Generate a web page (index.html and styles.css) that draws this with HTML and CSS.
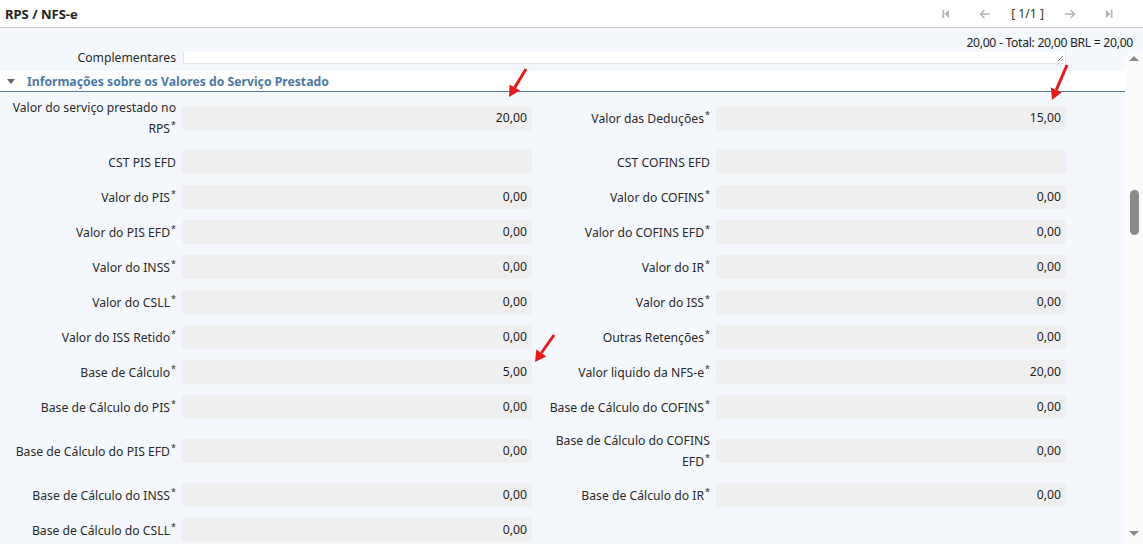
FILE: index.html
```html
<!DOCTYPE html>
<html lang="pt-br">
<head>
  <meta charset="UTF-8">
  <title>RPS / NFS-e</title>
  <link rel="stylesheet" href="styles.css">
</head>
<body>
  <div class="topbar">
    <span class="title">RPS / NFS-e</span>
    <div class="pager">
      <span class="pg-btn">
        <svg width="12" height="12" viewBox="0 0 12 12"><rect x="2.5" y="2" width="1.6" height="8" fill="#b4b4b4"/><polygon points="4.5,6 9,2 9,10" fill="#b4b4b4"/></svg>
      </span>
      <span class="pg-btn">
        <svg width="12" height="12" viewBox="0 0 12 12"><path d="M11 6H1.5M5.5 2L1.5 6L5.5 10" fill="none" stroke="#b0b0b0" stroke-width="1.3"/></svg>
      </span>
      <span class="pg-count">[ 1/1 ]</span>
      <span class="pg-btn">
        <svg width="12" height="12" viewBox="0 0 12 12"><path d="M1 6H10.5M6.5 2L10.5 6L6.5 10" fill="none" stroke="#b0b0b0" stroke-width="1.3"/></svg>
      </span>
      <span class="pg-btn">
        <svg width="12" height="12" viewBox="0 0 12 12"><polygon points="3,2 7.5,6 3,10" fill="#b4b4b4"/><rect x="7.9" y="2" width="1.6" height="8" fill="#b4b4b4"/></svg>
      </span>
    </div>
  </div>

  <div class="totals">20,00 - Total: 20,00 BRL = 20,00</div>

  <div class="scroll">
    <div class="form-area">
      <!-- campo complementares (cortado pelo scroll) -->
      <div class="compl-row">
        <label>Complementares</label>
        <div class="textarea">
          <svg class="grip" width="7" height="7" viewBox="0 0 7 7"><path d="M1 6L6 1M4 6L6 4" stroke="#777" stroke-width="0.9"/></svg>
        </div>
      </div>

      <div class="section">
        <span class="caret"></span>
        Informações sobre os Valores do Serviço Prestado
      </div>

      <div class="grid">
        <label>Valor do serviço prestado no RPS<sup>*</sup></label>
        <div class="field">20,00</div>
        <label>Valor das Deduções<sup>*</sup></label>
        <div class="field">15,00</div>

        <label>CST PIS EFD</label>
        <div class="field"></div>
        <label>CST COFINS EFD</label>
        <div class="field"></div>

        <label>Valor do PIS<sup>*</sup></label>
        <div class="field">0,00</div>
        <label>Valor do COFINS<sup>*</sup></label>
        <div class="field">0,00</div>

        <label>Valor do PIS EFD<sup>*</sup></label>
        <div class="field">0,00</div>
        <label>Valor do COFINS EFD<sup>*</sup></label>
        <div class="field">0,00</div>

        <label>Valor do INSS<sup>*</sup></label>
        <div class="field">0,00</div>
        <label>Valor do IR<sup>*</sup></label>
        <div class="field">0,00</div>

        <label>Valor do CSLL<sup>*</sup></label>
        <div class="field">0,00</div>
        <label>Valor do ISS<sup>*</sup></label>
        <div class="field">0,00</div>

        <label>Valor do ISS Retido<sup>*</sup></label>
        <div class="field">0,00</div>
        <label>Outras Retenções<sup>*</sup></label>
        <div class="field">0,00</div>

        <label>Base de Cálculo<sup>*</sup></label>
        <div class="field">5,00</div>
        <label>Valor liquido da NFS-e<sup>*</sup></label>
        <div class="field">20,00</div>

        <label>Base de Cálculo do PIS<sup>*</sup></label>
        <div class="field">0,00</div>
        <label>Base de Cálculo do COFINS<sup>*</sup></label>
        <div class="field">0,00</div>

        <label>Base de Cálculo do PIS EFD<sup>*</sup></label>
        <div class="field">0,00</div>
        <label>Base de Cálculo do COFINS EFD<sup>*</sup></label>
        <div class="field">0,00</div>

        <label>Base de Cálculo do INSS<sup>*</sup></label>
        <div class="field">0,00</div>
        <label>Base de Cálculo do IR<sup>*</sup></label>
        <div class="field">0,00</div>

        <label>Base de Cálculo do CSLL<sup>*</sup></label>
        <div class="field">0,00</div>
      </div>
    </div>

    <div class="scrollbar">
      <span class="sb-up"></span>
      <span class="sb-thumb"></span>
      <span class="sb-down"></span>
    </div>
  </div>

  <!-- setas de destaque -->
  <svg class="marks" width="1143" height="544" viewBox="0 0 1143 544">
    <g fill="#e21c1c" stroke="#e21c1c">
      <line x1="526" y1="69" x2="514.7" y2="87.6" stroke-width="3"/>
      <polygon points="509,97 520,90.6 509.6,84.4" stroke="none"/>
      <line x1="1067" y1="65" x2="1056.3" y2="89.9" stroke-width="3"/>
      <polygon points="1052,100 1061.8,92.3 1050.8,87.5" stroke="none"/>
      <line x1="554" y1="335" x2="541.3" y2="353" stroke-width="3"/>
      <polygon points="535,362 546.3,356.5 536.3,349.5" stroke="none"/>
    </g>
  </svg>
</body>
</html>
```

FILE: styles.css
```css
* {
  box-sizing: border-box;
}

body {
  margin: 0;
  height: 544px;
  overflow: hidden;
  font-family: "Noto Sans", sans-serif;
  font-size: 12.2px;
  color: #2a2a2a;
  background-color: #f4f7fc;
  position: relative;
}

/* Barra de titulo */
.topbar {
  height: 28px;
  background-color: #ffffff;
  border-bottom: 1px solid #c9c9c9;
  display: flex;
  align-items: center;
  justify-content: space-between;
  padding: 0 20px 0 5px;
}

.title {
  font-weight: 700;
  font-size: 13px;
  color: #222;
}

.pager {
  display: flex;
  align-items: center;
  gap: 11px;
}

.pg-btn {
  width: 28px;
  display: flex;
  justify-content: center;
}

.pg-btn svg {
  display: block;
}

.pg-count {
  color: #333;
  margin: 0 1px;
}

.totals {
  height: 24px;
  line-height: 16px;
  padding: 7px 10px 0 0;
  text-align: right;
  color: #222;
  letter-spacing: -0.3px;
}

/* Area com scroll */
.scroll {
  display: flex;
  height: 492px;
  overflow: hidden;
}

.form-area {
  flex: 1;
}

.compl-row {
  display: grid;
  grid-template-columns: 183px 883px;
  height: 12px;
}

.compl-row label {
  text-align: right;
  padding-right: 7px;
  line-height: 12px;
}

.textarea {
  position: relative;
  background-color: #ffffff;
  border: 1px solid #e3e3e3;
  border-top: none;
}

.grip {
  position: absolute;
  right: 1px;
  bottom: 1px;
}

.section {
  margin-top: 7px;
  height: 21px;
  background-color: #ffffff;
  border-bottom: 1px solid #52799b;
  display: flex;
  align-items: center;
  padding-left: 7px;
  font-weight: 700;
  color: #4b79a5;
}

.caret {
  width: 0;
  height: 0;
  border-left: 4px solid transparent;
  border-right: 4px solid transparent;
  border-top: 5px solid #666;
  margin-right: 12px;
}

.grid {
  display: grid;
  grid-template-columns: 182px 350px 184px 350px;
  row-gap: 11px;
  align-items: center;
  padding-top: 5px;
}

.grid label {
  text-align: right;
  padding-right: 6px;
  line-height: 21px;
}

sup {
  font-size: 9px;
  line-height: 0;
  vertical-align: 5px;
  margin-left: 1px;
}

.field {
  height: 24px;
  line-height: 24px;
  background-color: #efefef;
  border-radius: 4px;
  text-align: right;
  padding-right: 5px;
  color: #1e1e1e;
}

/* Scrollbar */
.scrollbar {
  width: 18px;
  background-color: #fafafa;
  display: flex;
  flex-direction: column;
  align-items: center;
}

.sb-up,
.sb-down {
  width: 0;
  height: 0;
  border-left: 5px solid transparent;
  border-right: 5px solid transparent;
}

.sb-up {
  margin-top: 4px;
  border-bottom: 5px solid #8a8a8a;
}

.sb-thumb {
  margin-top: 129px;
  width: 9px;
  height: 45px;
  border-radius: 5px;
  background-color: #8b8b8b;
}

.sb-down {
  margin-top: auto;
  margin-bottom: 8px;
  border-top: 5px solid #8a8a8a;
}

.marks {
  position: absolute;
  top: 0;
  left: 0;
  pointer-events: none;
}
```
